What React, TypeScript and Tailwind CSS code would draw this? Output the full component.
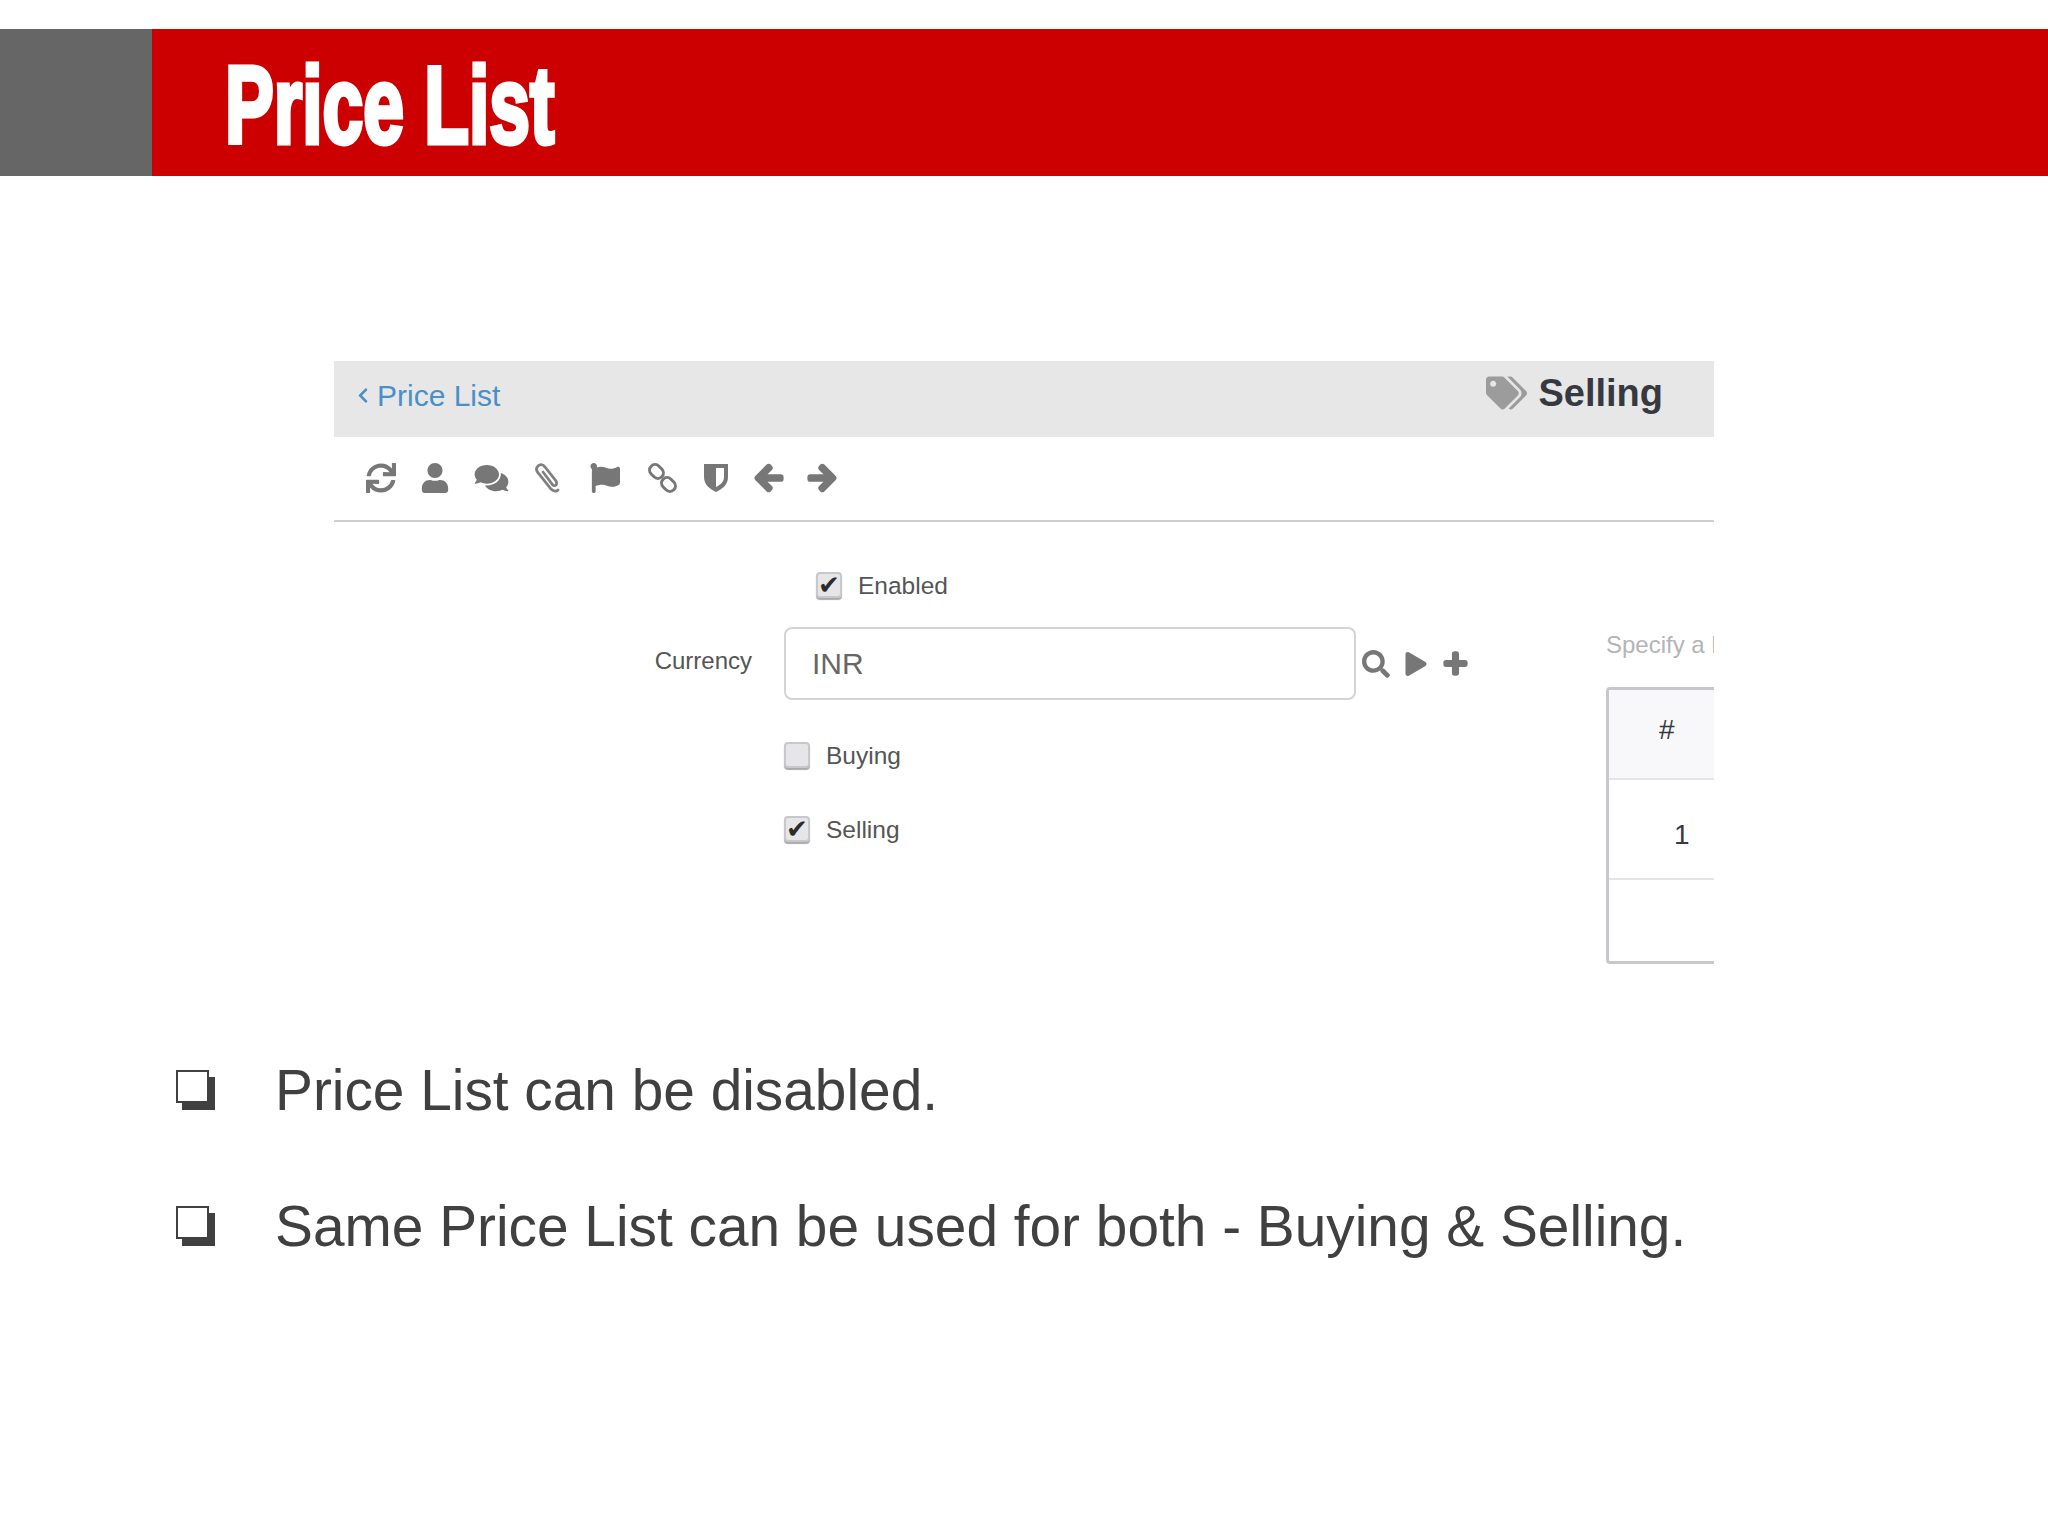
import React from 'react';
import {
  FaArrowLeft,
  FaArrowRight,
  FaChevronLeft,
  FaComments,
  FaFlag,
  FaPlay,
  FaPlus,
  FaSearch,
  FaSync,
  FaTags,
  FaUser
} from 'react-icons/fa';

const Checkbox = ({ checked }: { checked?: boolean }) => (
  <span className="flex h-[26px] w-[26px] items-center justify-center rounded-[4px] border-2 border-[#c8c8cc] bg-[#e6e6e8] shadow-[0_2px_1px_#aaaaaa]">
    {checked && <span className="font-['DejaVu_Sans',sans-serif] text-[26px] leading-none text-[#2b2b2b]">✔</span>}
  </span>
);

const CheckRow = ({ label, checked, className }: { label: string; checked?: boolean; className: string }) => (
  <div className={`flex h-[26px] items-center gap-4 text-[24.5px] text-[#555555] ${className}`}>
    <Checkbox checked={checked} />
    <span className="mt-[2px]">{label}</span>
  </div>
);

// 盾のアイコン（右半分が白抜き）
const ShieldIcon = () => (
  <svg viewBox="0 0 26 30" className="h-[30px] w-[26px]">
    <path d="M1 1h24v13c0 8-6 12-12 15C7 26 1 22 1 14z" fill="#777777" />
    <path d="M13 5h8v9c0 5-4 8-8 10z" fill="#ffffff" />
  </svg>
);

// クリップは細い線で描く
const ClipIcon = () => (
  <svg viewBox="0 0 29 30" className="h-[30px] w-[29px]" fill="none" stroke="#808080" strokeWidth="2.8" strokeLinecap="round">
    <path d="M24 27c-2 2-5 1-7-1L5 11C2 8 2 5 4 3c2-2 5-2 7 1l11 14c1 2 1 3 0 4s-3 1-4-1L9 9" />
  </svg>
);

// 鎖のアイコン（左上から右下へ二つの輪）
const ChainIcon = () => (
  <svg viewBox="0 0 31 30" className="h-[30px] w-[31px]" fill="none" stroke="#777777" strokeWidth="3">
    <rect x="2" y="3" width="15" height="11" rx="5.5" transform="rotate(45 9.5 8.5)" />
    <rect x="14" y="16" width="15" height="11" rx="5.5" transform="rotate(45 21.5 21.5)" />
  </svg>
);

const Bullet = ({ text }: { text: string }) => (
  <li className="flex h-[64px] items-center">
    <span className="mb-[10px] h-[33px] w-[33px] border-2 border-[#404040] bg-white shadow-[6px_7px_0_#404040]" />
    <span className="ml-[66px] text-[56.8px] text-[#404040]">{text}</span>
  </li>
);

export default function App() {
  return (
    <div className="h-[1536px] w-[2048px] overflow-hidden bg-white pt-[29px] font-['Liberation_Sans',sans-serif]">
      {/* タイトル帯 */}
      <header className="flex h-[147px] bg-[#cc0000]">
        <div className="w-[152px] bg-[#666666]" />
        <h1 className="ml-[73px] mt-[9px] origin-left scale-x-[0.665] text-[110px] leading-[134px] font-bold whitespace-nowrap text-white [-webkit-text-stroke:5px_white]">
          Price List
        </h1>
      </header>

      {/* フォームのスクリーンショット部分 */}
      <section className="ml-[334px] mt-[185px] w-[1380px] overflow-hidden">
        <div className="flex h-[76px] items-center justify-between bg-[#e7e7e8] pl-[23px] pr-[51px]">
          <div className="mb-[8px] flex items-center gap-[8px] text-[30px] text-[#4a90c8]">
            <FaChevronLeft className="h-[17px] w-[12px]" />
            <span>Price List</span>
          </div>
          <div className="mb-[12px] flex items-center gap-[11px]">
            <FaTags className="h-[36px] w-[41px] text-[#9c9c9c]" />
            <span className="text-[38px] font-bold text-[#36393f]">Selling</span>
          </div>
        </div>

        <div className="flex h-[85px] items-center gap-[25px] border-b-2 border-[#cfcfd2] pb-[2px] pl-[32px] text-[#777777]">
          <FaSync className="h-[30px] w-[30px]" />
          <FaUser className="h-[30px] w-[28px]" />
          <FaComments className="h-[30px] w-[35px]" />
          <ClipIcon />
          <FaFlag className="h-[30px] w-[34px]" />
          <ChainIcon />
          <ShieldIcon />
          <FaArrowLeft className="h-[30px] w-[30px]" stroke="currentColor" strokeWidth={50} />
          <FaArrowRight className="ml-[-2px] h-[30px] w-[30px]" stroke="currentColor" strokeWidth={50} />
        </div>

        <div className="flex h-[444px]">
          <div className="w-[1272px]">
            <CheckRow label="Enabled" checked className="ml-[482px] mt-[50px]" />
            <div className="mt-[29px] flex h-[73px] items-center">
              <label className="mb-[6px] w-[418px] text-right text-[24px] text-[#555555]">Currency</label>
              <div className="ml-[32px] flex h-full w-[572px] items-center rounded-[8px] border-2 border-[#d4d4d6] pl-[26px] text-[30px] text-[#666666]">
                INR
              </div>
              <div className="flex items-center text-[#777777]">
                <FaSearch className="ml-[6px] h-[28px] w-[28px]" />
                <FaPlay className="ml-[14px] h-[24px] w-[24px]" />
                <FaPlus className="ml-[15px] h-[25px] w-[25px]" stroke="currentColor" strokeWidth={50} />
              </div>
            </div>
            <CheckRow label="Buying" className="ml-[450px] mt-[42px]" />
            <CheckRow label="Selling" checked className="ml-[450px] mt-[48px]" />
          </div>

          <div className="w-[108px] overflow-hidden pt-[109px]">
            <p className="h-[28px] whitespace-nowrap text-[24px] leading-[28px] text-[#b4b4b8]">Specify a list</p>
            <div className="mt-[28px] h-[277px] w-[200px] rounded-[4px] border-[3px] border-[#c8c8cc]">
              <div className="flex h-[90px] items-center border-b-2 border-[#e4e4e6] bg-[#f8f8fa] pb-[8px] pl-[50px] text-[28px] text-[#36393f]">
                #
              </div>
              <div className="flex h-[100px] items-center border-b-2 border-[#e4e4e6] pl-[65px] pt-[12px] text-[28px] text-[#36393f]">
                1
              </div>
            </div>
          </div>
        </div>
      </section>

      <ul className="ml-[176px] mt-[93px] flex flex-col gap-[72px]">
        <Bullet text="Price List can be disabled." />
        <Bullet text="Same Price List can be used for both - Buying & Selling." />
      </ul>
    </div>
  );
}
